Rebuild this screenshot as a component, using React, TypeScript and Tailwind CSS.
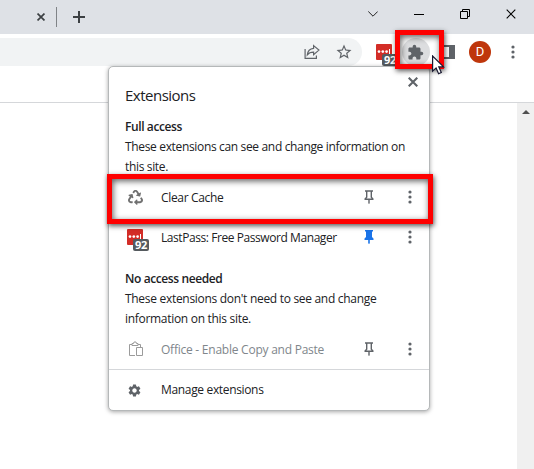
import type { ReactNode } from 'react';
import { FaRecycle } from 'react-icons/fa';
import { MdExtension, MdSettings, MdStarBorder } from 'react-icons/md';

function Cross({ className, thin = false }: { className: string; thin?: boolean }) {
  return (
    <svg viewBox="0 0 10 10" className={className} fill="none" stroke="currentColor" strokeWidth={thin ? 1.1 : 2.1}>
      <path d="M.7.7 9.3 9.3M9.3.7.7 9.3" />
    </svg>
  );
}

function Dots({ className = '' }: { className?: string }) {
  return (
    <svg viewBox="0 0 4 14" className={`h-[14px] w-1 shrink-0 ${className}`} fill="#5f6368">
      <circle cx="2" cy="2" r="1.6" />
      <circle cx="2" cy="7" r="1.6" />
      <circle cx="2" cy="12" r="1.6" />
    </svg>
  );
}

function Pin({ active = false }: { active?: boolean }) {
  return (
    <svg viewBox="0 0 10 14" className="h-[14px] w-[10px] shrink-0">
      {active ? (
        <path d="M1 0h8v1.5H8V7l1.5 1.5V10h-3.7v3.2L5 14l-.8-.8V10H.5V8.5L2 7V1.5H1z" fill="#1a73e8" />
      ) : (
        <path
          fillRule="evenodd"
          d="M1 0.3h8v1.4H8V7l1.5 1.5V10H5.7v3.2L5 14l-.7-.8V10H.5V8.5L2 7V1.7H1zM3.4 1.7v5.8L2.4 8.6h5.2L6.6 7.5V1.7z"
          fill="#5f6368"
        />
      )}
    </svg>
  );
}

function LastPass() {
  return (
    <span className="relative block size-4 shrink-0 rounded-[1px] bg-[#d32d27]">
      <svg viewBox="0 0 16 16" className="block size-4" fill="#fff">
        <circle cx="3" cy="7.6" r="1.35" />
        <circle cx="6.8" cy="7.6" r="1.35" />
        <circle cx="10.6" cy="7.6" r="1.35" />
        <path d="M13 5h1v5h-1z" />
      </svg>
      <span className="absolute left-[6px] top-[10px] flex h-3 w-4 items-center justify-center rounded-[2px] bg-[#555a5e] text-[11px] font-bold leading-3 tracking-[-0.3px] text-white">
        92
      </span>
    </span>
  );
}

function Clipboard() {
  return (
    <svg viewBox="0 0 16 16" className="ml-px size-4" fill="none" stroke="#9b9b9b">
      <path d="M7 14.5H1.5v-11H4M10 3.5h2.5V6M4 4.5v-2h1.5L6 1h2l.5 1.5H10v2zM8.5 6.5h6v8h-6z" />
    </svg>
  );
}

function Share() {
  return (
    <svg viewBox="0 0 16 16" className="size-4" fill="none" stroke="#5f6368" strokeWidth="1.2">
      <path d="M1.1 5v9.4h11.3v-3M9.6 1.6l5.3 4.5-5.3 4.5V8.2c-3.2 0-4.8.7-6.3 2.6.4-3.8 2.4-6.1 6.3-6.5z" />
    </svg>
  );
}

type RowProps = { icon: ReactNode; name: string; nameClass: string; pinned?: boolean };

function Row({ icon, name, nameClass, pinned }: RowProps) {
  return (
    <div className="flex h-10 items-center px-[18px]">
      <div className="flex w-[34px] shrink-0">{icon}</div>
      <span className={`grow whitespace-nowrap pt-px ${nameClass}`}>{name}</span>
      <Pin active={pinned} />
      <Dots className="-mr-[0.5px] ml-[33.5px]" />
    </div>
  );
}

function Highlight({ className }: { className: string }) {
  return (
    <div
      className={`absolute border-[5px] border-[#fe0000] shadow-[1px_2px_5px_rgba(0,0,0,0.65),inset_1px_2px_6px_rgba(0,0,0,0.65)] ${className}`}
    />
  );
}

export default function App() {
  return (
    <div className="relative flex h-[469px] w-[534px] flex-col overflow-hidden bg-white font-['Open_Sans','Noto_Sans',sans-serif] text-[12px] text-[#202124]">
      <header className="flex h-[34px] shrink-0 bg-[#dee1e6] text-[#3c4043]">
        <Cross className="ml-[37px] mt-[13px] size-2" />
        <div className="ml-[11px] mt-[7px] h-5 w-px bg-[#808387]" />
        <svg viewBox="0 0 12 12" className="ml-4 mt-[11px] size-3" stroke="currentColor" strokeWidth="2">
          <path d="M6 0v12M0 6h12" />
        </svg>
        <div className="ml-auto flex pr-[18px] text-black">
          <svg viewBox="0 0 10 6" className="mt-[11px] h-[6px] w-[10px]" fill="none" stroke="#222">
            <path d="m.3.5 4.7 4.7L9.7.5" />
          </svg>
          <div className="ml-9 mt-[14px] h-px w-[10px] bg-black" />
          <svg viewBox="0 0 10 10" className="ml-9 mt-[9px] size-[10px]" fill="none" stroke="#000">
            <path d="M.5 2.5h7v7h-7zM2.5 2.5v-2h7v7h-2" />
          </svg>
          <Cross thin className="ml-9 mt-[9px] size-[10px]" />
        </div>
      </header>

      <div className="flex h-[68px] shrink-0 items-start pt-1">
        <div className="flex h-7 w-[362px] items-center justify-end rounded-r-full bg-[#f1f3f4] pr-[9px]">
          <Share />
          <MdStarBorder className="ml-[15px] size-[18px] text-[#5f6368]" />
        </div>
        <div className="ml-[14px] mt-[6px]"><LastPass /></div>
        <div className="ml-[10px] flex size-7 items-center justify-center rounded-full bg-[#dcdddf]">
          <MdExtension className="mr-px size-[17px] text-[#5f6368]" />
        </div>
        <div className="ml-[10px] mt-[7px] h-[14px] w-[15px] border-2 border-r-[6px] border-[#5f6368]" />
        <div className="ml-[14px] mt-[3px] flex size-[22px] items-center justify-center rounded-full bg-[#bf360c] font-['Roboto',sans-serif] text-[13px] text-white">
          D
        </div>
        <Dots className="ml-[19.5px] mt-[7px]" />
      </div>
      <main className="flex grow justify-end border-t border-[#d5d7da]">
        <div className="flex w-[17px] justify-center bg-[#f0f0f0] pt-[7px]">
          <svg viewBox="0 0 8 4" className="h-1 w-2" fill="#505050"><path d="M4 0 8 4H0z" /></svg>
        </div>
      </main>

      <section className="absolute left-[108px] top-[66px] flex h-[345px] w-[322px] flex-col rounded-[5px] border border-[#b5b8b9] bg-white leading-5 shadow-[0_1px_4px_rgba(0,0,0,0.35)]">
        <div className="flex h-[50px] shrink-0 justify-between pl-4 pr-[11px]">
          <h1 className="pt-[18px] text-[15px] leading-5 tracking-[-0.5px]">Extensions</h1>
          <Cross className="mt-[10px] size-[10px] text-[#5f6368]" />
        </div>
        <div className="whitespace-nowrap pl-4">
          <h2 className="font-semibold tracking-[-0.4px]">Full access</h2>
          <p className="tracking-[-0.34px]">These extensions can see and change information on<br />this site.</p>
        </div>
        <Row icon={<FaRecycle className="ml-px size-[15px] text-[#707070]" />} name="Clear Cache" nameClass="tracking-[-0.33px]" />
        <Row icon={<LastPass />} name="LastPass: Free Password Manager" nameClass="tracking-[-0.43px]" pinned />
        <div className="mt-3 whitespace-nowrap pl-4">
          <h2 className="font-semibold tracking-[-0.4px]">No access needed</h2>
          <p className="tracking-[-0.3px]">These extensions don't need to see and change<br />information on this site.</p>
        </div>
        <Row icon={<Clipboard />} name="Office - Enable Copy and Paste" nameClass="tracking-[-0.24px] text-[#80868b]" />
        <div className="flex grow items-center border-t border-[#d5d7da] pl-[18px]">
          <MdSettings className="size-[15px] text-[#5f6368]" />
          <span className="ml-[19px] tracking-[-0.34px]">Manage extensions</span>
        </div>
      </section>

      <Highlight className="left-[107px] top-[174px] h-[50px] w-[326px]" />
      <Highlight className="left-[395px] top-[30px] h-[39px] w-[49px]" />
      <svg viewBox="0 0 13 20" className="absolute left-[432px] top-[55px] h-5 w-[13px]" fill="#fff" stroke="#181830" strokeWidth="1.2">
        <path d="M.6 1v15.2l3.5-3.3 2.5 5.8 2.7-1.2-2.5-5.6h4.8z" />
      </svg>
    </div>
  );
}
